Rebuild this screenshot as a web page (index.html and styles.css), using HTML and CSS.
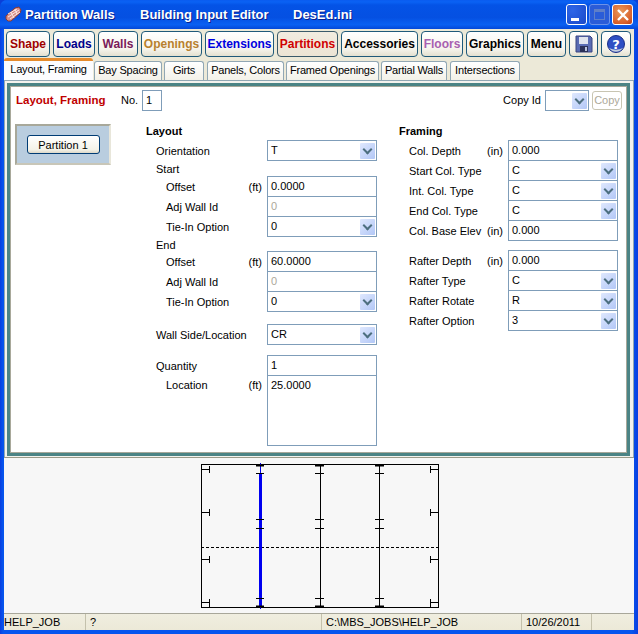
FILE: index.html
```html
<!DOCTYPE html>
<html lang="en">
<head>
  <meta charset="UTF-8" />
  <title>Partition Walls</title>
  <link rel="stylesheet" href="styles.css">
</head>
<body>
<div class="window">
  <header class="titlebar">
    <svg class="app-icon" width="17" height="17" viewBox="0 0 17 17">
      <path d="M1 10 L10 2 L14 1 L16 4 L15 7 L6 15 L3 15 L1 13 Z" fill="#d9908a" stroke="#8a3a34"/>
      <path d="M3 8 L12 3 M3 11 L14 4 M5 13 L15 6 M6 6 L9 12 M10 3 L12 8" stroke="#fbe8e4" fill="none"/>
    </svg>
    <span class="title-part title-a">Partition Walls</span>
    <span class="title-part title-b">Building Input Editor</span>
    <span class="title-part">DesEd.ini</span>
    <div class="win-btns">
      <div class="win-btn"><i class="min-glyph"></i></div>
      <div class="win-btn disabled"><i class="max-glyph"></i></div>
      <div class="win-btn close">
        <svg width="14" height="14" viewBox="0 0 14 14"><path d="M2 2 L12 12 M12 2 L2 12" stroke="#fff" stroke-width="2.4"/></svg>
      </div>
    </div>
  </header>

  <nav class="toolbar">
    <button class="tool c-shape">Shape</button>
    <button class="tool c-loads">Loads</button>
    <button class="tool c-walls">Walls</button>
    <button class="tool c-openings">Openings</button>
    <button class="tool c-ext">Extensions</button>
    <button class="tool c-part active">Partitions</button>
    <button class="tool c-black">Accessories</button>
    <button class="tool c-floors">Floors</button>
    <button class="tool c-black">Graphics</button>
    <button class="tool c-black">Menu</button>
    <button class="tool icon-tool">
      <svg width="18" height="18" viewBox="0 0 18 18">
        <path d="M1 1 H15 L17 3 V17 H1 Z" fill="#5a6cb4" stroke="#3a4680"/>
        <rect x="4" y="2" width="9" height="7" fill="#dfe3ee"/>
        <rect x="5" y="11" width="8" height="6" fill="#2a3058"/>
        <rect x="10" y="12" width="2" height="4" fill="#b9c2dc"/>
      </svg>
    </button>
    <button class="tool icon-tool help-tool">
      <svg width="20" height="20" viewBox="0 0 20 20">
        <circle cx="10" cy="10" r="8.5" fill="#2f4fc4" stroke="#1c2f86"/>
        <path d="M3 14 A8.5 8.5 0 0 0 17 14 A12 8 0 0 1 3 14" fill="#c6cedd"/>
        <text x="10" y="15" class="help-q">?</text>
      </svg>
    </button>
  </nav>

  <div class="tabs">
    <div class="tab selected">Layout, Framing</div>
    <div class="tab t-bay">Bay Spacing</div>
    <div class="tab t-girts">Girts</div>
    <div class="tab t-panels">Panels, Colors</div>
    <div class="tab t-framed">Framed Openings</div>
    <div class="tab t-partial">Partial Walls</div>
    <div class="tab t-inter">Intersections</div>
  </div>

  <main class="panel">
    <div class="panel-inner">
      <div class="panel-head">
        <span class="panel-title">Layout, Framing</span>
        <span class="no-label">No.</span>
        <span class="field no-field">1</span>
        <span class="copy-label">Copy Id</span>
        <span class="field copy-field"><i class="arrow"></i></span>
        <span class="copy-btn">Copy</span>
      </div>

      <div class="panel-body">
        <aside class="card">
          <button class="card-btn">Partition 1</button>
        </aside>

        <section class="col col-layout">
          <h3>Layout</h3>
          <div class="row"><label>Orientation</label><span class="field">T<i class="arrow"></i></span></div>
          <div class="sub-head first">Start</div>
          <div class="row in"><label>Offset</label><em>(ft)</em><span class="field">0.0000</span></div>
          <div class="row in"><label>Adj Wall Id</label><span class="field off">0</span></div>
          <div class="row in"><label>Tie-In Option</label><span class="field">0<i class="arrow"></i></span></div>
          <div class="sub-head">End</div>
          <div class="row in"><label>Offset</label><em>(ft)</em><span class="field">60.0000</span></div>
          <div class="row in"><label>Adj Wall Id</label><span class="field off">0</span></div>
          <div class="row in"><label>Tie-In Option</label><span class="field">0<i class="arrow"></i></span></div>
          <div class="row gap-wall"><label>Wall Side/Location</label><span class="field">CR<i class="arrow"></i></span></div>
          <div class="row gap-qty"><label>Quantity</label><span class="field">1</span></div>
          <div class="row in tall"><label>Location</label><em>(ft)</em><span class="field area">25.0000</span></div>
        </section>

        <section class="col col-framing">
          <h3>Framing</h3>
          <div class="row"><label>Col. Depth</label><em>(in)</em><span class="field">0.000</span></div>
          <div class="row"><label>Start Col. Type</label><span class="field">C<i class="arrow"></i></span></div>
          <div class="row"><label>Int. Col. Type</label><span class="field">C<i class="arrow"></i></span></div>
          <div class="row"><label>End Col. Type</label><span class="field">C<i class="arrow"></i></span></div>
          <div class="row"><label>Col. Base Elev</label><em>(in)</em><span class="field">0.000</span></div>
          <div class="row gap-rafter"><label>Rafter Depth</label><em>(in)</em><span class="field">0.000</span></div>
          <div class="row"><label>Rafter Type</label><span class="field">C<i class="arrow"></i></span></div>
          <div class="row"><label>Rafter Rotate</label><span class="field">R<i class="arrow"></i></span></div>
          <div class="row"><label>Rafter Option</label><span class="field">3<i class="arrow"></i></span></div>
        </section>
      </div>
    </div>
  </main>

  <div class="canvas">
    <svg width="240" height="147" viewBox="200 463 240 147" class="plan">
      <rect x="201.5" y="464.5" width="237" height="143" fill="none" stroke="#000"/>
      <path d="M201 547.5 H439" stroke="#000" stroke-dasharray="3 2" fill="none"/>
      <path d="M320.5 465 V607 M379.5 465 V607" stroke="#000" fill="none"/>
      <rect x="259" y="473" width="3" height="134" fill="#0000f0"/>
      <path d="M260.5 463 V473 M260.5 607 V609" stroke="#0000f0" fill="none"/>
      <path d="M256 465.5 H264 M315 465.5 H324 M375 465.5 H384 M256 606.5 H264 M315 606.5 H324 M375 606.5 H384" stroke="#000" stroke-width="2" fill="none"/>
      <!-- girt ticks on the interior frames -->
      <path d="M256 473.5 H264 M256 519.5 H264 M256 528.5 H264 M256 598.5 H264
               M315 473.5 H324 M315 519.5 H324 M315 528.5 H324 M315 598.5 H324
               M375 473.5 H384 M375 519.5 H384 M375 528.5 H384 M375 598.5 H384" stroke="#000" fill="none"/>
      <!-- end wall columns -->
      <path d="M201 469.5 H209.5 M209.5 466 V473 M201 512.5 H209.5 M209.5 509 V516 M201 559.5 H209.5 M209.5 556 V563 M201 602.5 H209.5 M209.5 599 V607
               M430 469.5 H439 M430.5 466 V473 M430 512.5 H439 M430.5 509 V516 M430 559.5 H439 M430.5 556 V563 M430 602.5 H439 M430.5 599 V607" stroke="#000" fill="none"/>
    </svg>
  </div>

  <footer class="status">
    <span class="s-job">HELP_JOB</span>
    <span class="s-q">?</span>
    <span class="s-path">C:\MBS_JOBS\HELP_JOB</span>
    <span class="s-date">10/26/2011</span>
    <span class="s-end"></span>
  </footer>
</div>
</body>
</html>
```

FILE: styles.css
```css
html, body {
  margin: 0;
  height: 100%;
  overflow: hidden;
  background: #0a3fd8;
}
* {
  box-sizing: border-box;
}
.window {
  width: 638px;
  height: 634px;
  display: flex;
  flex-direction: column;
  padding: 0 4px 4px;
  background: linear-gradient(90deg, #0a3ee0, #0655ee 3px, #0655ee 99%, #0a3ee0);
  font-family: "Liberation Sans", Arial, sans-serif;
  font-size: 11px;
  color: #000;
  border-radius: 7px 7px 0 0;
  overflow: hidden;
}

/* title bar */
.titlebar {
  height: 29px;
  margin: 0 -4px;
  padding: 0 5px;
  display: flex;
  align-items: center;
  background: linear-gradient(#0a5cf0 0, #0a62f4 2px, #0453e6 5px, #0550e2 60%, #0a60f2 85%, #0448d8);
  font-weight: bold;
  font-size: 13px;
  color: #fff;
  text-shadow: 1px 1px 0 #0a1f8c;
}
.app-icon {
  flex: none;
  margin-right: 3px;
}
.title-a { width: 115px; }
.title-b { width: 153px; }
.win-btns {
  margin-left: auto;
  display: flex;
  gap: 2px;
}
.win-btn {
  width: 21px;
  height: 21px;
  border: 1px solid #fff;
  border-radius: 3px;
  background: radial-gradient(circle at 30% 30%, #2e66e8, #1a49c8);
  display: flex;
  position: relative;
  justify-content: center;
  align-items: center;
}
.win-btn.disabled {
  border-color: #6d92e8;
  background: #2a5cd8;
}
.win-btn.close {
  background: radial-gradient(circle at 40% 35%, #e89a5c, #d8602c 70%, #b83c18);
}
.min-glyph {
  position: absolute;
  left: 4px;
  bottom: 3px;
  width: 8px;
  height: 3px;
  background: #fff;
}
.max-glyph {
  width: 11px;
  height: 11px;
  border: 1px solid #5f7fc8;
  border-top-width: 3px;
}

/* toolbar */
.toolbar {
  height: 29px;
  background: #ece9d8;
  padding: 2px 2px 0;
  display: flex;
  gap: 3px;
  align-items: flex-start;
}
.tool {
  height: 26px;
  padding: 0;
  border: 1px solid #1f5a7a;
  border-radius: 4px;
  background: linear-gradient(#fff, #f6f4ec 70%, #e4e0d0);
  font-family: "Liberation Sans", Arial, sans-serif;
  font-weight: bold;
  font-size: 12px;
  display: flex;
  align-items: center;
  justify-content: center;
}
.tool.active {
  background: linear-gradient(#f2ece0, #ece4d4);
  border-color: #3a5a6a;
}
.c-shape { width: 44px; color: #a00000; }
.c-loads { width: 42px; color: #00008b; }
.c-walls { width: 40px; color: #7a1a5a; }
.c-openings { width: 61px; color: #b8812e; }
.c-ext { width: 69px; color: #0000e0; }
.c-part { width: 61px; color: #d00000; }
.c-black { color: #000; }
.c-black:nth-child(7) { width: 77px; }
.c-black:nth-child(9) { width: 58px; }
.c-black:nth-child(10) { width: 39px; }
.c-floors { width: 42px; color: #a860b0; }
.icon-tool { width: 29px; }
.help-tool { width: 30px; }
.help-q {
  font: bold 13px "DejaVu Sans", sans-serif;
  fill: #fff;
  text-anchor: middle;
}

/* tabs */
.tabs {
  height: 22px;
  background: #ece9d8;
  display: flex;
  align-items: flex-end;
  letter-spacing: -0.2px;
}
.tab {
  height: 19px;
  border: 1px solid #91a7b4;
  border-bottom: 0;
  border-radius: 3px 3px 0 0;
  background: linear-gradient(#fff, #f3f1e8);
  padding-top: 2px;
  text-align: center;
  white-space: nowrap;
}
.tab.selected {
  height: 22px;
  width: 89px;
  background: #fcfcfe;
  border: 0;
  border-top: 3px solid #e68b2c;
  padding-top: 2px;
  position: relative;
}
.t-bay { width: 68px; margin-left: 1px; }
.t-girts { width: 40px; margin-left: 2px; }
.t-panels { width: 77px; margin-left: 3px; }
.t-framed { width: 93px; margin-left: 2px; }
.t-partial { width: 66px; margin-left: 2px; }
.t-inter { width: 70px; margin-left: 3px; }

/* main panel */
.panel {
  height: 378px;
  background: #f4f3ee;
  border: 1px solid #91a7b4;
  border-bottom: 1px solid #9b9a88;
  padding: 2px 3px 1px 2px;
}
.panel-inner {
  height: 100%;
  border: 3px solid #4b8485;
  background: #fff;
  box-shadow: inset 0 0 0 1px #a8a89a;
  padding: 2px;
}
.panel-head {
  height: 33px;
  display: flex;
  align-items: flex-start;
  padding: 2px 0 0 4px;
}
.panel-title {
  font-weight: bold;
  font-size: 11.5px;
  line-height: 20px;
  color: #c00000;
  width: 105px;
}
.no-label {
  width: 21px;
  line-height: 20px;
}
.field {
  position: relative;
  display: block;
  width: 110px;
  height: 21px;
  flex: none;
  border: 1px solid #7f9db9;
  background: #fff;
  padding: 1px 0 0 3px;
  margin-bottom: -1px;
  line-height: 16px;
}
.no-field {
  width: 20px;
  margin: 0;
}
.copy-label {
  margin-left: auto;
  margin-right: 4px;
  line-height: 20px;
}
.copy-field {
  width: 44px;
  margin: 0 3px 0 0;
}
.copy-btn {
  width: 30px;
  height: 19px;
  margin: 1px 3px 0 0;
  border: 1px solid #c8c5b2;
  border-radius: 3px;
  color: #aca899;
  text-align: center;
  line-height: 17px;
}
.arrow {
  position: absolute;
  top: 2px;
  right: 1px;
  width: 15px;
  height: 16px;
  background: linear-gradient(135deg, #dfe8fe, #b2c7f6);
  border-radius: 1px;
}
.arrow::after {
  content: "";
  position: absolute;
  left: 4px;
  top: 3px;
  width: 5px;
  height: 5px;
  border-right: 2px solid #4d6f7f;
  border-bottom: 2px solid #4d6f7f;
  transform: rotate(45deg);
}
.panel-body {
  display: flex;
  align-items: flex-start;
}
.card {
  width: 96px;
  height: 41px;
  margin: 3px 0 0 3px;
  background: #b9cddf;
  border: 2px solid;
  border-color: #a8a89a #e8e6da #c8c6b8 #a8a89a;
  display: flex;
  justify-content: center;
  align-items: center;
}
.card-btn {
  width: 73px;
  height: 19px;
  padding: 0;
  border: 1px solid #003c74;
  border-radius: 3px;
  background: linear-gradient(#fff, #f4f2e8 80%, #dcd8c8);
  font: 11px "Liberation Sans", Arial, sans-serif;
}
.col h3 {
  margin: 0;
  height: 19px;
  line-height: 20px;
  font-size: 11px;
  font-weight: bold;
}
.col-layout {
  margin-left: 35px;
  width: 231px;
}
.col-framing {
  margin-left: 22px;
  width: 219px;
}
.row {
  display: flex;
  align-items: center;
  height: 20px;
  padding-left: 10px;
}
.row label {
  flex: 1;
  white-space: nowrap;
  padding-top: 1px;
}
.row em {
  font-style: normal;
  margin-right: 5px;
  padding-top: 1px;
}
.row.in { padding-left: 20px; }
.sub-head {
  height: 15px;
  line-height: 18px;
  padding-left: 10px;
}
.sub-head.first {
  height: 16px;
}
.gap-wall { margin-top: 13px; }
.gap-qty { margin-top: 11px; }
.gap-rafter { margin-top: 10px; }
.row.tall {
  height: 71px;
  align-items: flex-start;
}
.row.tall label, .row.tall em {
  padding-top: 4px;
}
.field.area {
  height: 71px;
  margin: 0;
}
.off { color: #aca899; }

/* diagram strip */
.canvas {
  height: 156px;
  background: #f7f7f7;
  display: flex;
  justify-content: center;
  padding: 5px 0 0 2px;
  border-bottom: 1px solid #a8a79a;
}
.plan {
  display: block;
}

/* status bar */
.status {
  height: 16px;
  background: linear-gradient(#f0eee0, #ece9d8);
  display: flex;
  align-items: center;
}
.status span {
  height: 100%;
  border-right: 1px solid #c4c1ac;
  line-height: 17px;
  white-space: nowrap;
}
.s-job { width: 82px; }
.s-q { width: 236px; padding-left: 4px; }
.s-path { width: 200px; padding-left: 4px; }
.s-date { width: 70px; padding-left: 4px; }
.status .s-end { border: 0; }
```
